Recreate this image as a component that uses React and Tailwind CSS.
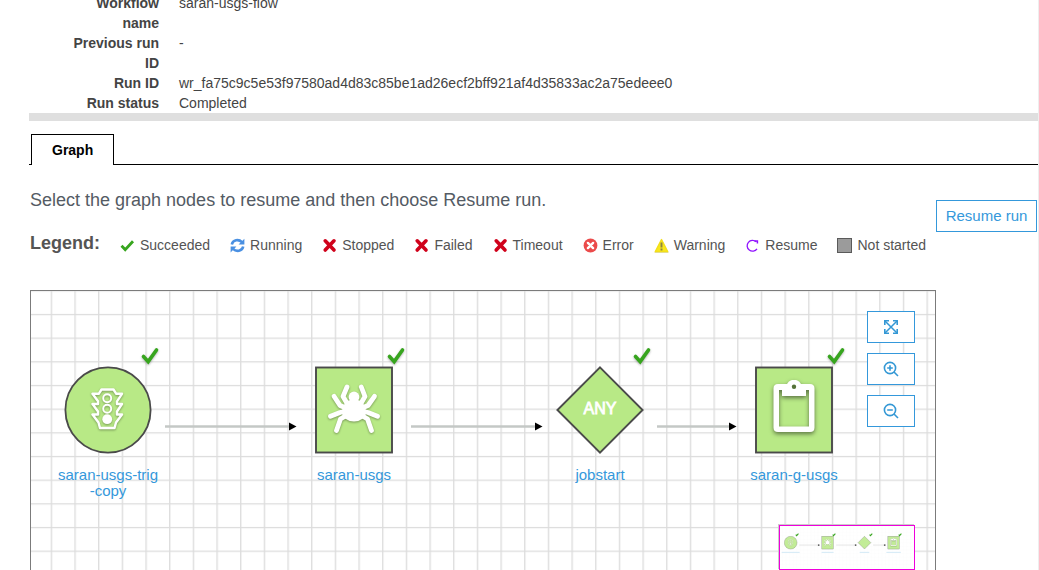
import React from "react";

const details = [
  ["Workflow name", "saran-usgs-flow"],
  ["Previous run ID", "-"],
  ["Run ID", "wr_fa75c9c5e53f97580ad4d83c85be1ad26ecf2bff921af4d35833ac2a75edeee0"],
  ["Run status", "Completed"],
];

function Check() {
  return <path d="M1.5 7.8 L5.2 11.6 L13 3.2" fill="none" stroke="#37a51e" strokeWidth="2.8" />;
}

function Cross() {
  return (
    <path d="M3.2 2.8 L12 12 M12 2.8 L3.2 12" fill="none" stroke="#d0021b" strokeWidth="3.6" strokeLinecap="round" />
  );
}

function Running() {
  return (
    <g fill="none" stroke="#4a90e2" strokeWidth="2.6">
      <path d="M1.8 6.6 C2.8 1.8 8.6 0.8 12 4.2" />
      <path d="M13.2 8.6 C12.2 13.4 6.4 14.2 3 10.9" />
      <path d="M14.4 0.8 V6.6 H8.6 Z" fill="#4a90e2" stroke="none" />
      <path d="M0.6 14.4 V8.6 H6.4 Z" fill="#4a90e2" stroke="none" />
    </g>
  );
}

function ErrorIcon() {
  return (
    <g>
      <circle cx="7.5" cy="7.5" r="6.9" fill="#eb4b4b" />
      <path d="M4.9 4.9 L10.1 10.1 M10.1 4.9 L4.9 10.1" fill="none" stroke="#fff" strokeWidth="2.4" strokeLinecap="round" />
    </g>
  );
}

function WarningIcon() {
  return (
    <g>
      <path d="M7.5 1.6 L13.8 13.8 H1.2 Z" fill="#f8e71c" stroke="#f3df1a" strokeWidth="1.4" strokeLinejoin="round" />
      <path d="M0.6 14.7 H14.4" stroke="#cfc98a" strokeWidth="0.6" />
      <path d="M7.5 4.4 V9.4 M7.5 10.6 V12.6" stroke="#8b8440" strokeWidth="1.9" />
    </g>
  );
}

function ResumeIcon() {
  return (
    <g fill="none" stroke="#9013fe" strokeWidth="1.3">
      <path d="M11.2 3.8 A5.4 5.4 0 1 0 12 10.8" />
      <path d="M9.4 3 H12.4 V5.4" strokeWidth="1.5" />
    </g>
  );
}

function NotStarted() {
  return <rect x="0.5" y="0.5" width="14" height="14" fill="#9b9b9b" stroke="#5a5a5a" />;
}

const legend = [
  ["Succeeded", Check],
  ["Running", Running],
  ["Stopped", Cross],
  ["Failed", Cross],
  ["Timeout", Cross],
  ["Error", ErrorIcon],
  ["Warning", WarningIcon],
  ["Resume", ResumeIcon],
  ["Not started", NotStarted],
];

const GREEN = "#b8e986";
const EDGE = "#4a4a4a";

function TriggerShape() {
  return (
    <g>
      <circle r="42.6" fill={GREEN} stroke={EDGE} strokeWidth="1.8" />
      <g className="drop-shadow-[0_1px_1px_rgba(0,0,0,0.35)]" fill="none" stroke="#fff" strokeWidth="2.4" strokeLinejoin="round">
        <path d="M-6.5 -20.5 H5.5 L8.3 -16.2 H14 L9 -8.7 V-6 H14 L9 1.5 V4.5 H14 L8 12.5 L6.5 18 H-8 L-9.5 12.5 L-15.5 4.5 H-10 V1.5 L-15.5 -6 H-10 V-8.7 L-15.5 -16.2 H-9.3 Z" />
        <circle cx="-0.8" cy="-11.7" r="4" strokeWidth="1.9" />
        <circle cx="-0.8" cy="-1.2" r="4" strokeWidth="1.9" />
        <circle cx="-0.8" cy="9.2" r="4.9" fill="#fff" stroke="none" />
      </g>
    </g>
  );
}

function CrawlerShape() {
  return (
    <g>
      <rect x="-38" y="-42.5" width="76" height="85" fill={GREEN} stroke={EDGE} strokeWidth="1.9" />
      <g className="drop-shadow-[0_1px_1px_rgba(0,0,0,0.35)]" fill="none" stroke="#fff" strokeWidth="4.8" strokeLinecap="round" strokeLinejoin="round">
        <path d="M-6 -5 L-11 -13.5 L-7 -23" />
        <path d="M6 -5 L11 -13.5 L7.3 -23" />
        <path d="M-8 -2 L-14 -4.5 L-20 -13.7" />
        <path d="M8 -2 L14 -4.5 L20.5 -13.7" />
        <path d="M-8 1 L-14 2.5 L-23.5 6.3" />
        <path d="M8 1 L14 2.5 L23.5 6.3" />
        <path d="M-7 5 L-13.5 9 L-17.5 20.5" />
        <path d="M7 5 L13.5 9 L17.5 20.5" />
        <g fill="#fff" stroke="none">
          <circle cx="0" cy="-13" r="5.4" />
          <ellipse cx="0" cy="-4.5" rx="10" ry="6" />
          <ellipse cx="0" cy="2" rx="12" ry="9.5" />
        </g>
      </g>
    </g>
  );
}

function AnyShape({ mini }) {
  return (
    <g>
      <path d="M0 -42.6 L42.6 0 L0 42.6 L-42.6 0 Z" fill={GREEN} stroke={EDGE} strokeWidth="1.9" />
      {!mini && (
        <text y="4" textAnchor="middle" fontSize="16" fill="#fff" stroke="#fff" strokeWidth="0.8">
          ANY
        </text>
      )}
    </g>
  );
}

function JobShape() {
  return (
    <g>
      <rect x="-38" y="-42.5" width="76" height="85" fill={GREEN} stroke={EDGE} strokeWidth="1.9" />
      <g className="drop-shadow-[0_2px_2px_rgba(0,0,0,0.5)]" fill="#fff">
        <path
          fillRule="evenodd"
          d="M-16 -26 H-7 C-5.5 -28 -4.5 -30 0 -30 C4.5 -30 5.5 -28 7 -26 H16 Q20.5 -26 20.5 -21.5 V17.5 Q20.5 22 16 22 H-16 Q-20.5 22 -20.5 17.5 V-21.5 Q-20.5 -26 -16 -26 Z M-12 -20 H-15 V16.5 H15 V-20 H12 V-14 H-12 Z"
        />
        <circle cx="0" cy="-23.3" r="2.2" fill="#557238" />
      </g>
    </g>
  );
}

const nodes = [
  { x: 77, label: ["saran-usgs-trig", "-copy"], Shape: TriggerShape },
  { x: 323, label: ["saran-usgs"], Shape: CrawlerShape },
  { x: 569, label: ["jobstart"], Shape: AnyShape },
  { x: 763, label: ["saran-g-usgs"], Shape: JobShape },
];

const edges = [
  [134, 266],
  [380, 512],
  [626, 706],
];

function NodeCheck() {
  return (
    <path
      d="M-6.5 0.5 L-1.8 5.6 L6.5 -6"
      fill="none"
      stroke="#37a51e"
      strokeWidth="3.6"
      strokeLinecap="round"
      className="drop-shadow-[0_1px_1px_rgba(0,0,0,0.3)]"
    />
  );
}

function Edges() {
  return edges.map(([from, to]) => (
    <g key={from}>
      <path d={`M${from} 135.5 H${to - 6}`} stroke="#c4c8c6" strokeWidth="2.6" />
      <path d={`M${to - 8} 131.5 L${to - 0.5} 135.5 L${to - 8} 139.5 Z`} fill="#000" />
    </g>
  ));
}

function Grid({ id }) {
  return (
    <>
      <defs>
        <pattern id={id} x="19.7" y="22.9" width="23.67" height="23.67" patternUnits="userSpaceOnUse">
          <path d="M0.7 0 V23.67 M0 0.7 H23.67" stroke="#dcdcdc" strokeWidth="1.3" />
        </pattern>
      </defs>
      <rect width="100%" height="100%" fill={`url(#${id})`} />
    </>
  );
}

function MiniMap() {
  return (
    <div className="absolute right-5 bottom-0 h-[45px] w-[136px] border border-[#f000dc] bg-white shadow-[-1px_-1px_0_#ccc]">
      <svg className="block h-full w-full overflow-hidden" viewBox="6 8 893 287" preserveAspectRatio="xMinYMin slice" aria-hidden="true">
        <g opacity="0.3">
          <Grid id="mini-grid" />
        </g>
        {edges.map(([from, to]) => (
          <g key={from}>
            <path d={`M${from} 135 H${to - 6}`} stroke="#ddd" strokeWidth="5" />
            <circle cx={to - 2} cy="135" r="6" fill="#555" />
          </g>
        ))}
        {nodes.map(({ x, Shape, label }) => (
          <g key={x} transform={`translate(${x} 119)`}>
            <g opacity="0.85">
              <Shape mini />
            </g>
            <path d="M34 -54 L40 -47 L52 -60" fill="none" stroke="#37a51e" strokeWidth="7" />
            <path d={`M${-label[0].length * 4} 65 H${label[0].length * 4}`} stroke="#d9ecf7" strokeWidth="8" />
          </g>
        ))}
      </svg>
    </div>
  );
}

function CanvasButton({ label, children }) {
  return (
    <button type="button" aria-label={label} className="flex h-8 w-12 items-center justify-center border border-[#3498db] bg-white">
      <svg className="h-4 w-4" viewBox="0 0 16 16" fill="none" stroke="#3498d5" strokeWidth="1.6" aria-hidden="true">
        {children}
      </svg>
    </button>
  );
}

export default function App() {
  return (
    <main className="flex h-screen flex-col overflow-hidden border-r border-[#eee] bg-white pl-[29px] font-['Liberation_Sans',Arial,sans-serif] text-sm text-[#444]">
      <dl className="-mt-[7px] grid grid-cols-[130px_1fr] gap-x-5 leading-5">
        {details.map(([name, value]) => (
          <React.Fragment key={name}>
            <dt className="pl-10 text-right font-bold">{name}</dt>
            <dd>{value}</dd>
          </React.Fragment>
        ))}
      </dl>
      <div className="-mr-px h-2 shrink-0 bg-[#dfdfdf]" />

      <div role="tablist" className="mt-[13px] flex shrink-0 border-b border-black pl-0.5">
        <button
          type="button"
          role="tab"
          aria-selected="true"
          className="-mb-px h-[31px] border border-b-0 border-black bg-white px-5 font-bold text-black"
        >
          Graph
        </button>
      </div>

      <section className="flex min-h-0 flex-1 pr-px pl-px">
        <div className="flex min-w-0 flex-1 flex-col">
          <h2 className="mt-[23px] text-lg leading-6 text-[#545b64]">Select the graph nodes to resume and then choose Resume run.</h2>
          <div className="mt-[23px] flex items-center gap-5 whitespace-nowrap text-[#545454]">
            <h3 className="-mt-1 text-lg leading-6 font-bold">Legend:</h3>
            <ul className="flex gap-5">
              {legend.map(([name, Icon]) => (
                <li key={name} className="flex items-center gap-[5px]">
                  <svg className="h-[15px] w-[15px] shrink-0" viewBox="0 0 15 15" aria-hidden="true">
                    <Icon />
                  </svg>
                  {name}
                </li>
              ))}
            </ul>
          </div>

          <div className="relative mt-[35px] min-h-0 flex-1 overflow-hidden border border-b-0 border-[#7b7b7b]">
            <svg className="h-full w-full" aria-hidden="true">
              <Grid id="canvas-grid" />
              <Edges />
            </svg>
            {nodes.map(({ x, label, Shape }) => (
              <button
                key={x}
                type="button"
                className="absolute top-[53px] flex w-[120px] -translate-x-1/2 flex-col items-center gap-[11px] text-[15px] leading-4 text-[#3498db]"
                style={{ left: x }}
              >
                <svg className="h-28 w-[120px] shrink-0" viewBox="-60 -66 120 112">
                  <Shape />
                  <g transform="translate(42 -54)">
                    <NodeCheck />
                  </g>
                </svg>
                <span>
                  {label.map((line) => (
                    <span key={line} className="block">{line}</span>
                  ))}
                </span>
              </button>
            ))}
            <div className="absolute top-5 right-5 flex flex-col gap-2.5">
              <CanvasButton label="Fit to screen">
                <path d="M2 2 L14 14 M14 2 L2 14" strokeWidth="1.5" />
                <path d="M1.8 6 V1.8 H6 M10 1.8 H14.2 V6 M14.2 10 V14.2 H10 M6 14.2 H1.8 V10" />
              </CanvasButton>
              <CanvasButton label="Zoom in">
                <circle cx="7" cy="7" r="5.6" />
                <path d="M11 11 L15 15 M4.2 7 H9.8 M7 4.2 V9.8" />
              </CanvasButton>
              <CanvasButton label="Zoom out">
                <circle cx="7" cy="7" r="5.6" />
                <path d="M11 11 L15 15 M4.2 7 H9.8" />
              </CanvasButton>
            </div>
            <MiniMap />
          </div>
        </div>
        <button
          type="button"
          className="mt-[35px] h-8 w-[101px] shrink-0 border border-[#3498db] bg-white text-[15px] whitespace-nowrap text-[#3498db]"
        >
          Resume run
        </button>
      </section>
    </main>
  );
}
